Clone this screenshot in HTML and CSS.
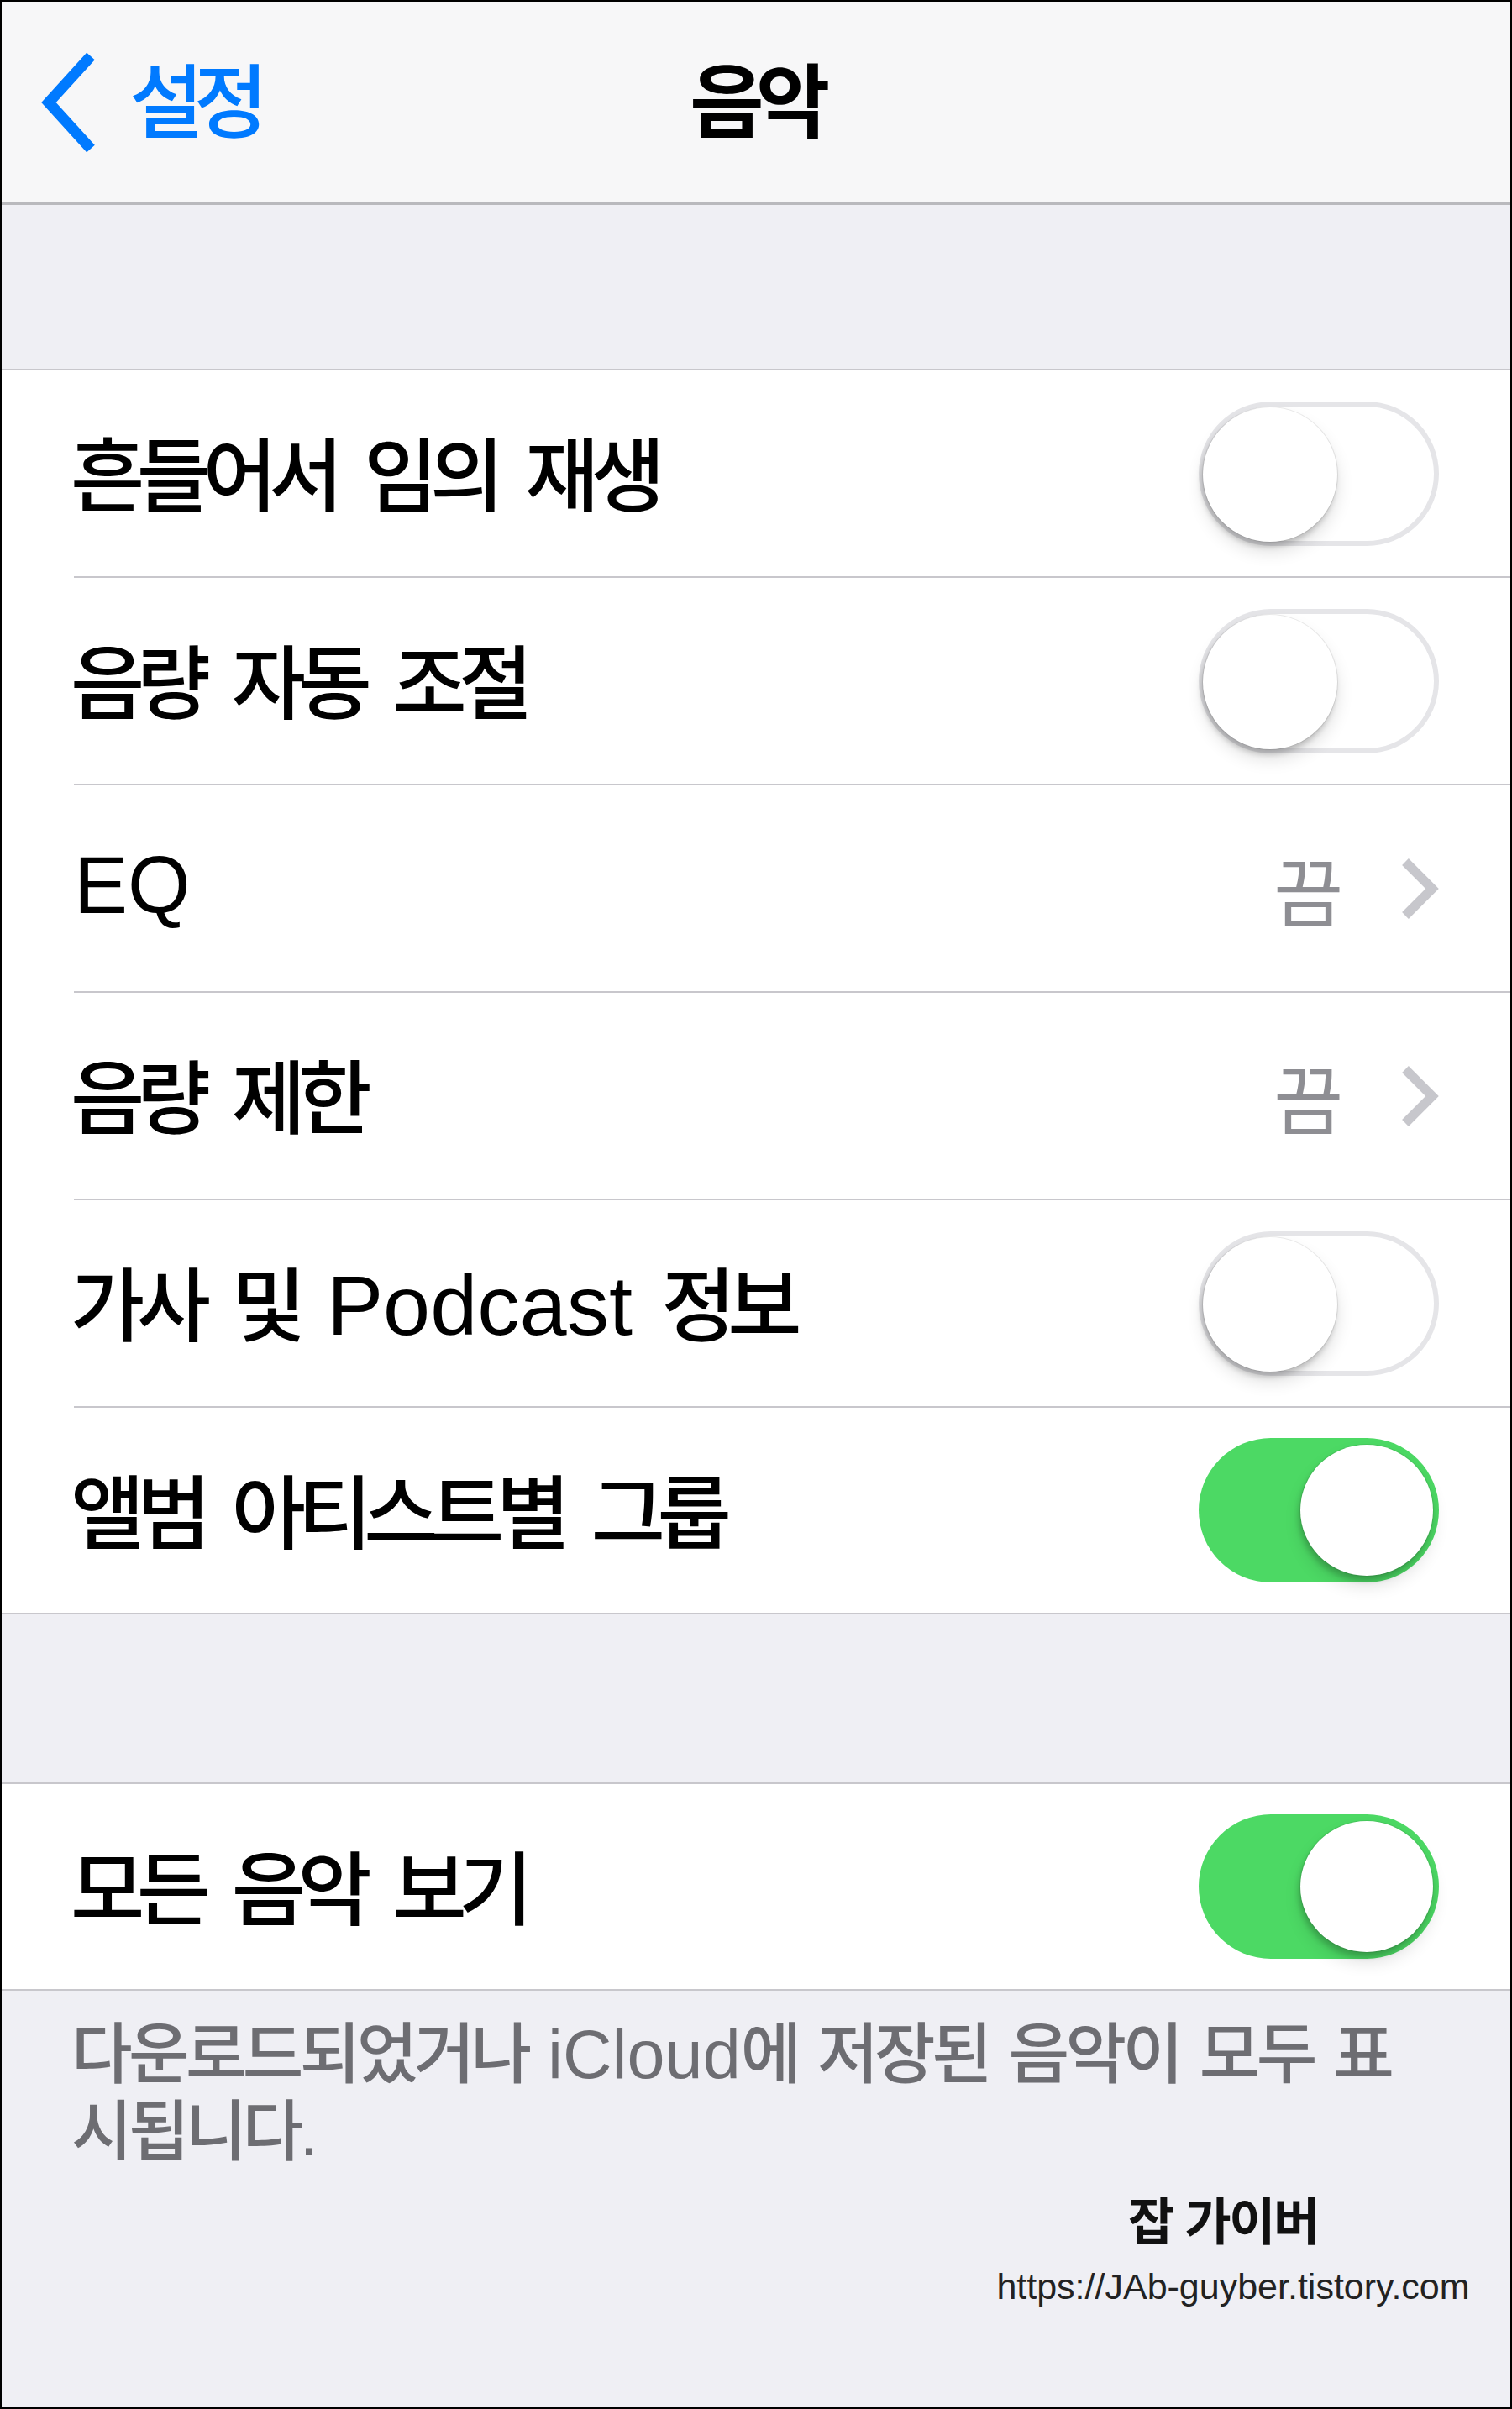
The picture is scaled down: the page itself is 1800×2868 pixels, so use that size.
FILE: index.html
```html
<!DOCTYPE html>
<html lang="ko">
<head>
  <meta charset="UTF-8">
  <meta name="viewport" content="width=device-width, initial-scale=1.0">
  <title>음악 설정</title>
  <link rel="stylesheet" href="styles.css">
</head>
<body>
  <div class="screen">
    <!-- 상단 내비게이션 -->
    <header class="navbar">
      <a class="back">
        <svg class="back-icon" width="72" height="118" viewBox="0 0 72 118">
          <polyline points="62,4 12,59 62,114" fill="none" stroke="#007aff" stroke-width="13" stroke-linejoin="miter"/>
        </svg>
        <span>설정</span>
      </a>
      <h1 class="title">음악</h1>
      <div></div>
    </header>

    <div class="spacer"></div>

    <ul class="group">
      <li class="cell">
        <div class="cell-body">
          <span class="label">흔들어서 임의 재생</span>
          <span class="switch"><span class="knob"></span></span>
        </div>
      </li>
      <li class="cell">
        <div class="cell-body">
          <span class="label">음량 자동 조절</span>
          <span class="switch"><span class="knob"></span></span>
        </div>
      </li>
      <li class="cell">
        <div class="cell-body">
          <span class="label lat">EQ</span>
          <span class="detail">끔</span>
          <svg class="chevron" width="46" height="74" viewBox="0 0 46 74">
            <polyline points="6,5 38,37 6,69" fill="none" stroke="#c7c7cc" stroke-width="11"/>
          </svg>
        </div>
      </li>
      <li class="cell">
        <div class="cell-body">
          <span class="label">음량 제한</span>
          <span class="detail">끔</span>
          <svg class="chevron" width="46" height="74" viewBox="0 0 46 74">
            <polyline points="6,5 38,37 6,69" fill="none" stroke="#c7c7cc" stroke-width="11"/>
          </svg>
        </div>
      </li>
      <li class="cell">
        <div class="cell-body">
          <span class="label">가사 및 <span class="lat">Podcast</span> 정보</span>
          <span class="switch"><span class="knob"></span></span>
        </div>
      </li>
      <li class="cell">
        <div class="cell-body">
          <span class="label">앨범 아티스트별 그룹</span>
          <span class="switch on"><span class="knob"></span></span>
        </div>
      </li>
    </ul>

    <div class="spacer spacer-mid"></div>

    <ul class="group">
      <li class="cell">
        <div class="cell-body">
          <span class="label">모든 음악 보기</span>
          <span class="switch on"><span class="knob"></span></span>
        </div>
      </li>
    </ul>

    <p class="footnote">다운로드되었거나 <span class="lat">iCloud</span>에 저장된 음악이 모두 표<br>시됩니다.</p>

    <div class="credit">
      <span class="credit-name">잡 가이버</span>
      <span class="credit-url">https://JAb-guyber.tistory.com</span>
    </div>
  </div>
</body>
</html>
```

FILE: styles.css
```css
* {
  box-sizing: border-box;
}
html, body {
  margin: 0;
}
body {
  font-family: "Liberation Sans", "Noto Sans CJK KR", sans-serif;
  background: #efeff4;
  color: #000;
}
.screen {
  height: 2868px;
  border: 2px solid #000;
  background: #efeff4;
  overflow: hidden;
}

/* 내비게이션 바 */
.navbar {
  height: 242px;
  background: #f7f7f8;
  border-bottom: 3px solid #b9b9bd;
  display: grid;
  grid-template-columns: 1fr auto 1fr;
  align-items: center;
}
.back {
  display: flex;
  align-items: center;
  gap: 36px;
  margin-left: 44px;
  color: #007aff;
  font-size: 96px;
  font-weight: 500;
  letter-spacing: -0.12em;
}
.back span {
  margin-top: -14px;
}
.title {
  margin: 0;
  margin-top: -14px;
  font-size: 96px;
  font-weight: 700;
  letter-spacing: -0.1em;
}

.spacer {
  height: 195px;
}
.spacer-mid {
  height: 200px;
}

/* 셀 그룹 */
.group {
  list-style: none;
  margin: 0;
  padding: 0;
  background: #fff;
  border-top: 2px solid #c8c7cc;
  border-bottom: 2px solid #c8c7cc;
}
.cell {
  padding-left: 86px;
}
.cell-body {
  height: 247px;
  display: flex;
  align-items: center;
  padding-right: 85px;
  border-bottom: 2px solid #c8c7cc;
}
.cell:last-child .cell-body {
  height: 244px;
  border-bottom: 0;
}
.label {
  flex: 1;
  margin-left: -4px;
  margin-top: -8px;
  font-size: 96px;
  font-weight: 500;
  letter-spacing: -0.1em;
  word-spacing: 0.18em;
  white-space: nowrap;
}
.lat {
  font-size: 1.05em;
  letter-spacing: 0;
  word-spacing: 0;
}
.label.lat {
  margin-left: 0;
  font-size: 96px;
}
.detail {
  font-size: 90px;
  color: #8e8e93;
  margin-right: 68px;
}

/* 스위치 */
.switch {
  position: relative;
  width: 286px;
  height: 172px;
  border-radius: 86px;
  background: #fff;
  box-shadow: inset 0 0 0 6px #e5e5e8;
}
.knob {
  position: absolute;
  top: 7px;
  left: 5px;
  width: 160px;
  height: 160px;
  border-radius: 50%;
  background: #fff;
  box-shadow: 0 0 0 1px rgba(0, 0, 0, 0.08), -2px 6px 6px rgba(0, 0, 0, 0.18), 0 12px 20px rgba(0, 0, 0, 0.12);
}
.switch.on {
  background: #4cd964;
  box-shadow: none;
}
.switch.on .knob {
  left: auto;
  right: 7px;
  top: 8px;
  width: 158px;
  height: 156px;
}

/* 하단 설명 */
.footnote {
  margin: 0;
  padding: 30px 60px 0 83px;
  font-size: 79px;
  font-weight: 500;
  line-height: 92px;
  color: #6d6d72;
  letter-spacing: -0.06em;
  word-spacing: 0.08em;
}
.footnote .lat {
  font-size: 81px;
}

.credit {
  width: 600px;
  margin: 20px 30px 0 auto;
  text-align: center;
}
.credit-name {
  display: block;
  font-family: "Noto Sans CJK KR", sans-serif;
  font-size: 60px;
  font-weight: 700;
  line-height: 1.2;
  letter-spacing: -0.04em;
  color: #111;
  margin-right: 24px;
}
.credit-url {
  display: block;
  margin-top: 20px;
  font-size: 43px;
  line-height: 1.2;
  color: #222;
}
```
